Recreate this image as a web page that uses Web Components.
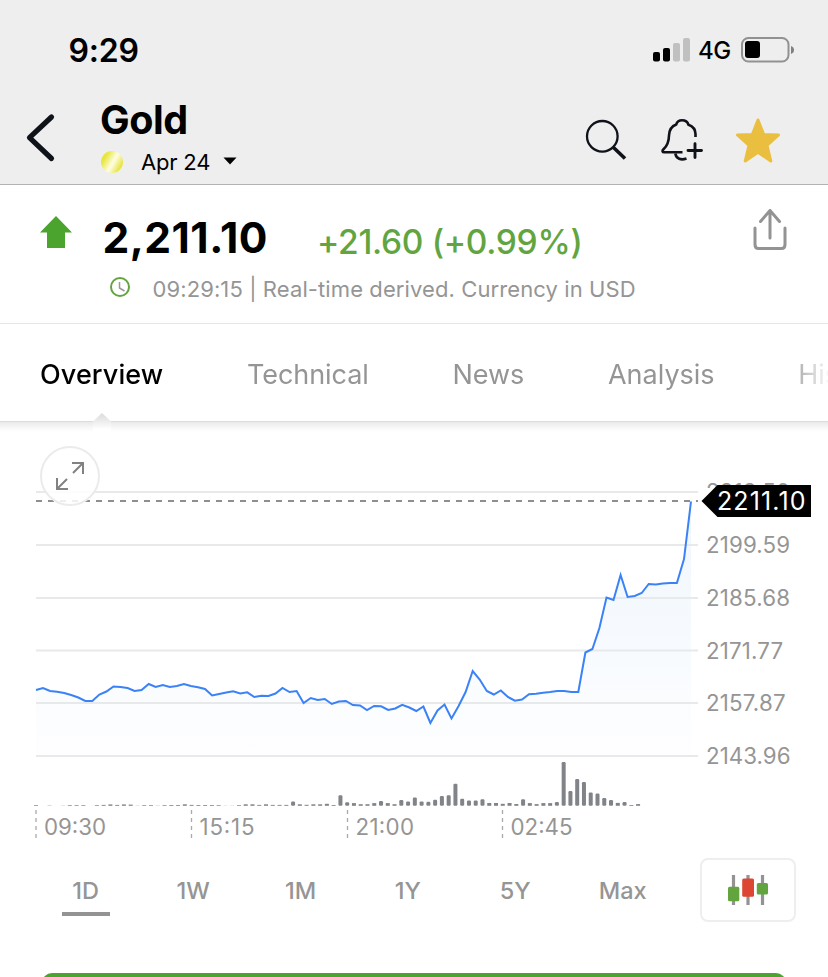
<!DOCTYPE html>
<html lang="en">
<head>
<meta charset="utf-8">
<title>Gold - Apr 24</title>
<style>
  body {
    margin: 0;
    width: 828px;
    height: 977px;
    overflow: hidden;
    background: #fff;
    color: #000;
    font-family: Inter, "Liberation Sans", sans-serif;
    --green: #4aa42d;
    --green-text: #62a53f;
    --grey: #959595;
    --ink: #10121a;
  }
</style>
</head>
<body>
<quote-app>
  <status-bar slot="top" network="4G">9:29</status-bar>
  <instrument-nav slot="top" name="Gold">Apr 24</instrument-nav>
  <price-quote price="2,211.10" change="+21.60 (+0.99%)">09:29:15 | Real-time derived. Currency in USD</price-quote>
  <section-tabs>
    <section-tab active style="letter-spacing: 0.1px">Overview</section-tab>
    <section-tab style="letter-spacing: -0.05px">Technical</section-tab>
    <section-tab>News</section-tab>
    <section-tab>Analysis</section-tab>
    <section-tab>Historical</section-tab>
  </section-tabs>
  <price-chart last="2211.10"></price-chart>
  <range-picker>
    <range-item active>1D</range-item>
    <range-item>1W</range-item>
    <range-item>1M</range-item>
    <range-item>1Y</range-item>
    <range-item>5Y</range-item>
    <range-item>Max</range-item>
  </range-picker>
  <promo-banner></promo-banner>
</quote-app>

<script>
// Attach an open shadow root filled from a template
function render(el, html) {
  const template = document.createElement('template');
  template.innerHTML = html;
  el.attachShadow({ mode: 'open' }).appendChild(template.content.cloneNode(true));
}

class QuoteApp extends HTMLElement {
  constructor() {
    super();
    render(this, /*html*/ `
      <style>
        :host { display: flex; flex-direction: column; }
        header { background: #eee; border-bottom: 1px solid #b2b2b2; }
      </style>
      <header><slot name="top"></slot></header>
      <slot></slot>
    `);
  }
}

class StatusBar extends HTMLElement {
  constructor() {
    super();
    render(this, /*html*/ `
      <style>
        :host {
          display: flex;
          align-items: center;
          box-sizing: border-box;
          height: 100px;
          padding: 0 34px 0 68.5px;
        }
        .time { flex: 1; font-size: 32px; font-weight: 600; line-height: 40px; letter-spacing: -0.2px; padding-top: 1px; }
        .network { width: 42px; padding: 2px 0 0 8px; box-sizing: border-box; font-size: 24px; font-weight: 500; line-height: 30px; letter-spacing: -0.4px; }
        svg { display: block; }
        .battery { margin-left: 9px; }
      </style>
      <span class="time"><slot></slot></span>
      <svg width="37" height="24" viewBox="0 0 37 24">
        <rect x="0" y="14" width="7" height="9.5" rx="2"/>
        <rect x="10" y="10" width="7" height="13.5" rx="2"/>
        <rect x="20" y="5" width="7" height="18.5" rx="2" fill="#c0c0c0"/>
        <rect x="30" y="0" width="7" height="23.5" rx="2" fill="#c0c0c0"/>
      </svg>
      <span class="network"></span>
      <svg class="battery" width="53" height="26" viewBox="0 0 53 26">
        <rect x="1" y="1" width="46.5" height="23.5" rx="6.5" fill="none" stroke="#919191" stroke-width="2"/>
        <rect x="4" y="4" width="15" height="17" rx="3"/>
        <path d="M50 9c4 1.2 4 6.800 0 8z" fill="#808080"/>
      </svg>
    `);
  }

  connectedCallback() {
    this.shadowRoot.querySelector('.network').textContent = this.getAttribute('network');
  }
}

class InstrumentNav extends HTMLElement {
  constructor() {
    super();
    render(this, /*html*/ `
      <style>
        :host {
          display: flex;
          align-items: flex-start;
          box-sizing: border-box;
          height: 84px;
          padding: 0 48px 0 24px;
        }
        svg { display: block; fill: none; stroke: var(--ink); }
        .back { margin: 12px 44px 0 0; }
        .title { flex: 1; }
        h1 { margin: 0; font-size: 39.5px; font-weight: 700; line-height: 40px; letter-spacing: -0.4px; }
        .contract {
          display: flex;
          align-items: center;
          height: 44px;
          font-size: 22px;
          line-height: 28px;
          letter-spacing: -0.2px;
        }
        .coin {
          width: 22px;
          height: 22px;
          margin: 0 18px 0 1px;
          border-radius: 50%;
          background: linear-gradient(120deg, #e8e63c 22%, #fdfde0 52%, #fbfad0 58%, #e8e644 82%);
        }
        .caret { margin-left: 12.5px; }
        .actions { display: flex; gap: 32px; margin-top: 18px; }
      </style>
      <svg class="back" width="32" height="52" viewBox="0 0 32 52" stroke-width="5.200" stroke-linecap="round" stroke-linejoin="round">
        <path d="M27.500 5L5.500 25.700L27.500 46.500"/>
      </svg>
      <div class="title">
        <h1></h1>
        <div class="contract">
          <span class="coin"></span>
          <slot></slot>
          <svg class="caret" width="14" height="10" viewBox="0 0 14 10"><path d="M0.500 0.500H13.500L7 7.500Z" fill="#000" stroke="none"/></svg>
        </div>
      </div>
      <div class="actions">
        <svg width="44" height="44" viewBox="0 0 44 44">
          <circle cx="18.300" cy="18.300" r="15.300" stroke-width="2.300"/>
          <path d="M29.500 29.500L41 40.500" stroke-width="3.600"/>
        </svg>
        <svg width="44" height="44" viewBox="0 0 44 44" stroke-width="2.600" stroke-linejoin="round">
          <path d="M35.500 19V16C35.500 11.500 32.500 8.300 28.500 6.800C27.500 3.500 25 2.300 22 2.300S17.200 3.500 16.200 6.500C11.500 8.200 9.200 12 9 17.500C8.900 23.500 8 27 3.700 31C1.800 32.900 2.200 34.300 4.500 34.300H22.500"/>
          <path d="M15.300 35.500C16.300 41 21 42.500 26.500 40.500"/>
          <path d="M28 32.500H41.500M35 25.800V39.500" stroke-width="2.900" stroke-linecap="round"/>
        </svg>
        <svg width="44" height="46" viewBox="0 0 44 46">
          <path d="M22 2L27.700 16.500L42.500 17L31 27.300L34.800 43L22 34.300L9.200 43L13 27.300L1.500 17L16.300 16.500Z" fill="#eabe3f" stroke="#eabe3f" stroke-width="3" stroke-linejoin="round"/>
        </svg>
      </div>
    `);
  }

  connectedCallback() {
    this.shadowRoot.querySelector('h1').textContent = this.getAttribute('name');
  }
}

class PriceQuote extends HTMLElement {
  constructor() {
    super();
    render(this, /*html*/ `
      <style>
        :host {
          display: flex;
          align-items: flex-start;
          box-sizing: border-box;
          height: 139px;
          padding: 0 41px 0 40px;
          border-bottom: 1px solid #e6e6e6;
          white-space: nowrap;
        }
        svg { display: block; }
        .up { margin: 31px 30.5px 0 0; }
        .body { flex: 1; }
        .prices { display: flex; align-items: center; height: 105px; }
        .price { width: 214.5px; font-size: 42.5px; font-weight: 700; letter-spacing: 0.45px; }
        .change { font-size: 33.5px; font-weight: 500; letter-spacing: -0.3px; color: var(--green-text); padding-top: 8px; }
        .note {
          display: flex;
          align-items: center;
          gap: 22.5px;
          height: 26px;
          margin-top: -14px;
          padding-left: 7.5px;
          font-size: 22px;
          letter-spacing: 0.1px;
          color: var(--grey);
        }
        .note svg { margin-top: -5px; }
        .share { margin-top: 22px; }
      </style>
      <svg class="up" width="32" height="32" viewBox="0 0 32 32"><path d="M16 0L32 16.500H25V32H7V16.500H0Z" fill="#4aa42d"/></svg>
      <div class="body">
        <div class="prices">
          <span class="price"></span>
          <span class="change"></span>
        </div>
        <div class="note">
          <svg width="20" height="20" viewBox="0 0 20 20" fill="none">
            <circle cx="10" cy="10" r="9" stroke="#62a53f" stroke-width="2"/>
            <path d="M9.500 5V11L14.500 14" stroke="#999" stroke-width="1.500"/>
          </svg>
          <span><slot></slot></span>
        </div>
      </div>
      <svg class="share" width="36" height="44" viewBox="0 0 36 44" fill="none" stroke="#939393" stroke-width="3" stroke-linecap="round" stroke-linejoin="round">
        <path d="M4 21V37.500C4 40.500 5 41.500 7.500 41.500H30.500C33 41.500 34 40.500 34 37.500V21"/>
        <path d="M19 31V3.500M9.500 14.500L19 3.500L28.500 14.500"/>
      </svg>
    `);
  }

  connectedCallback() {
    this.shadowRoot.querySelector('.price').textContent = this.getAttribute('price');
    this.shadowRoot.querySelector('.change').textContent = this.getAttribute('change');
  }
}

class SectionTabs extends HTMLElement {
  constructor() {
    super();
    render(this, /*html*/ `
      <style>
        :host { display: block; position: relative; height: 97px; border-bottom: 1px solid #dcdcdc; }
        nav {
          display: flex;
          gap: 83.6px;
          align-items: center;
          height: 101px;
          padding-left: 40px;
          overflow: hidden;
          -webkit-mask-image: linear-gradient(to right, #000 785px, transparent 832px);
          mask-image: linear-gradient(to right, #000 785px, transparent 832px);
        }
        .shadow {
          position: absolute;
          top: 98px;
          left: 0;
          width: 100%;
          height: 10px;
          background: linear-gradient(#e9e9e9, #f8f8f8 60%, #fff);
        }
        .notch { position: absolute; left: 91px; top: 89px; }
      </style>
      <nav><slot></slot></nav>
      <div class="shadow"></div>
      <svg class="notch" width="22" height="20" viewBox="0 0 22 20">
        <defs>
          <linearGradient id="fade" x1="0" y1="0" x2="0" y2="1">
            <stop offset="0" stop-color="#dadada"/>
            <stop offset="0.450" stop-color="#ededed"/>
            <stop offset="0.850" stop-color="#fff"/>
          </linearGradient>
        </defs>
        <path d="M11 0L20 8.500V19H2V8.500Z" fill="url(#fade)"/>
      </svg>
    `);
  }
}

class SectionTab extends HTMLElement {
  constructor() {
    super();
    render(this, /*html*/ `
      <style>
        :host { display: block; flex: none; font-size: 27px; line-height: 34px; color: var(--grey); }
        :host([active]) { font-weight: 500; color: #000; }
      </style>
      <slot></slot>
    `);
  }
}

// Vertical pixel of every sample on the price line, left to right
const PRICE = [
  690, 688, 691, 691.7, 693, 695, 697.5, 701, 701, 694.5,
  691.5, 686.5, 687, 688, 691, 690, 684, 687, 685, 687,
  686, 684, 686, 687.3, 689, 695.5, 694, 692.5, 691.3, 693.5,
  692.3, 697, 695.7, 696, 693.5, 688, 692, 691, 703, 698,
  700, 699, 704, 701.5, 701, 705, 705.5, 710, 706, 706.3,
  710, 708.5, 704.8, 707.5, 711, 706.5, 723, 710.5, 704.5, 718.5,
  706, 692, 671, 679.5, 691, 694.5, 690.5, 697, 700.7, 699.5,
  694.3, 693.7, 692.8, 692, 691, 691, 692, 692, 652.5, 649,
  628, 597.5, 600, 575, 597, 596, 593, 584, 584.5, 583.5,
  583, 583, 559, 501.5
];

const VOLUME = [
  0.7, 0, 0.3, 0, 0.2, 0.7, 0.7, 0.7, 0, 0.7,
  0.9, 1.4, 0.9, 1.4, 1.2, 0.2, 0.7, 0.7, 0.2, 0.7,
  0.8, 0.8, 1.5, 0.9, 0.8, 0.8, 0.8, 0.7, 0.15, 0.15,
  0.7, 1.5, 1.5, 0.9, 1.5, 0.9, 0.9, 0.9, 4.3, 1.5,
  1, 1.5, 1.5, 2, 0.8, 10.5, 3.5, 2.7, 1.6, 1.6,
  2.7, 4.7, 2.7, 1.6, 5.7, 4.4, 8.2, 4.4, 4, 6,
  9.7, 10.5, 22, 7, 5.2, 5.2, 6.6, 2.8, 2.8, 2,
  2.8, 1.8, 6.6, 2.7, 1.7, 2.7, 2.7, 3.8, 43.7, 14.7,
  26.7, 23.7, 13.2, 12.2, 7.7, 5.7, 2.9, 3.7, 0.8, 1.7
];

const LEVELS = [
  [492, '2213.50', 83], [545, '2199.59', 83], [598, '2185.68', 83],
  [650.5, '2171.77', 76], [703, '2157.87', 78.5], [756, '2143.96', 83.5]
];

const TIMES = [[36, '09:30', 61], [191.5, '15:15', 54], [347.5, '21:00', 57.5], [502.5, '02:45', 61]];

class PriceChart extends HTMLElement {
  constructor() {
    super();
    const left = 36;
    const bottom = 756;
    const points = PRICE.map((y, i) => `${(left + i * 7.043).toFixed(1)},${y}`).join(' ');
    const bars = VOLUME.map((h, i) => {
      const x = (left - 2 + i * 6.765).toFixed(2);
      return h ? `<rect x="${x}" y="${805.8 - h}" width="4" height="${h}" rx="${h > 3 ? 1.2 : 0}"/>` : '';
    }).join('');

    render(this, /*html*/ `
      <style>
        :host { display: block; height: 436px; }
        svg { display: block; }
        .grid line { stroke: #e8e9ea; stroke-width: 2; }
        .label { fill: var(--grey); font-size: 22.3px; }
        .tag { fill: #fff; font-size: 25px; }
        .ticks line { stroke: #aaa; stroke-width: 1.300; stroke-dasharray: 4 4; }
      </style>
      <svg width="828" height="436" viewBox="0 422 828 436">
        <defs>
          <linearGradient id="area" gradientUnits="userSpaceOnUse" x1="0" y1="501" x2="0" y2="756">
            <stop offset="0" stop-color="#eff6fd"/>
            <stop offset="0.500" stop-color="#f6fafe"/>
            <stop offset="1" stop-color="#fefeff"/>
          </linearGradient>
        </defs>
        <polygon points="${left},${bottom} ${points} 691,${bottom}" fill="url(#area)"/>
        <g class="grid">
          ${LEVELS.map(([y]) => `<line x1="${left}" x2="698" y1="${y}" y2="${y}"/>`).join('')}
        </g>
        ${LEVELS.map(([y, text, w]) => `<text class="label" x="706" y="${y + 8.2}" textLength="${w + 1}">${text}</text>`).join('')}
        <line x1="${left}" x2="698" y1="501" y2="501" stroke="#8e8e8e" stroke-width="2" stroke-dasharray="6 6"/>
        <polyline points="${points}" fill="none" stroke="#3b82f7" stroke-width="2"/>
        <path d="M701.500 501L717.500 485H811V517H717.500Z"/>
        <text class="tag" x="717" y="510" textLength="88.500"></text>
        <g fill="#808388">${bars}</g>
        <g class="ticks">
          ${TIMES.map(([x]) => `<line x1="${x}" x2="${x}" y1="810" y2="838"/>`).join('')}
        </g>
        ${TIMES.map(([x, text, w]) => `<text class="label" x="${x + 8}" y="835.200" textLength="${w + 1}">${text}</text>`).join('')}
        <g fill="none" stroke="#ebebeb" stroke-width="2">
          <circle cx="70" cy="476" r="29" fill="#fff" fill-opacity="0.850"/>
          <path d="M72 463H83V474M83 463L73 473M57 478V489H68M57 489L67 479" stroke="#828282"/>
        </g>
      </svg>
    `);
  }

  connectedCallback() {
    this.shadowRoot.querySelector('.tag').textContent = this.getAttribute('last');
  }
}

class RangePicker extends HTMLElement {
  constructor() {
    super();
    render(this, /*html*/ `
      <style>
        :host { display: flex; height: 64px; padding: 0 32px; }
        .ranges { display: flex; flex: 1; }
        button {
          display: flex;
          align-items: center;
          justify-content: center;
          box-sizing: border-box;
          width: 96px;
          height: 64px;
          padding: 0;
          border: 2px solid #eee;
          border-radius: 8px;
          background: #fff;
        }
      </style>
      <div class="ranges"><slot></slot></div>
      <button aria-label="Chart type">
        <svg width="40" height="30" viewBox="0 0 40 30">
          <g stroke="#939393" stroke-width="3.200">
            <path d="M5.500 0V30M20 0V30M34.500 0V30"/>
          </g>
          <rect x="0" y="11.700" width="11.300" height="14.600" rx="1.500" fill="#62a53f"/>
          <rect x="14.200" y="3.500" width="11.800" height="18.300" rx="1.500" fill="#dc4632"/>
          <rect x="28.800" y="8" width="11.200" height="11.500" rx="1.500" fill="#62a53f"/>
        </svg>
      </button>
    `);
  }
}

class RangeItem extends HTMLElement {
  constructor() {
    super();
    render(this, /*html*/ `
      <style>
        :host {
          display: flex;
          flex-direction: column;
          align-items: center;
          width: 107.4px;
          padding-top: 18px;
          box-sizing: border-box;
          font-size: 23.5px;
          font-weight: 500;
          line-height: 30px;
          color: var(--grey);
        }
        :host([active])::after {
          content: "";
          width: 48px;
          height: 4px;
          margin-top: 6px;
          background: #939393;
        }
      </style>
      <span><slot></slot></span>
    `);
  }
}

class PromoBanner extends HTMLElement {
  constructor() {
    super();
    render(this, /*html*/ `
      <style>
        /* only the top edge peeks into the viewport */
        :host { display: block; height: 4px; margin: 51px 42px 0; overflow: hidden; }
        div { height: 80px; border-radius: 10px; background: var(--green); }
      </style>
      <div></div>
    `);
  }
}

customElements.define('quote-app', QuoteApp);
customElements.define('status-bar', StatusBar);
customElements.define('instrument-nav', InstrumentNav);
customElements.define('price-quote', PriceQuote);
customElements.define('section-tabs', SectionTabs);
customElements.define('section-tab', SectionTab);
customElements.define('price-chart', PriceChart);
customElements.define('range-picker', RangePicker);
customElements.define('range-item', RangeItem);
customElements.define('promo-banner', PromoBanner);
</script>
</body>
</html>
